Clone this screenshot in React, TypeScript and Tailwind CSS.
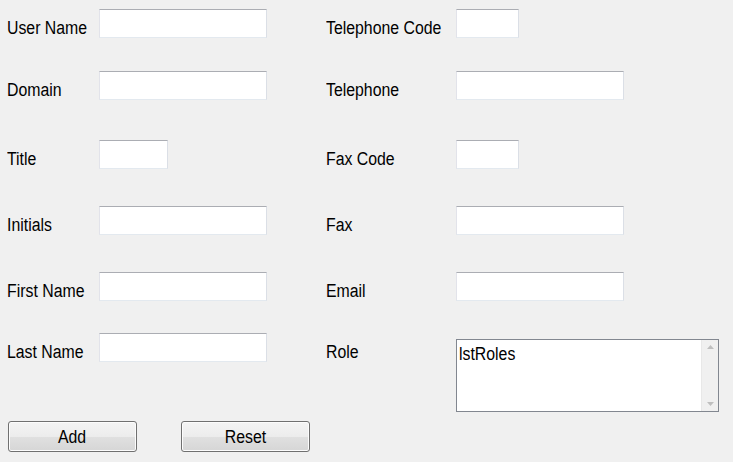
import React from "react";

const font = { fontFamily: '"Liberation Sans", Arial, sans-serif' };

function Narrow({ text, origin = "origin-left" }: { text: string; origin?: string }) {
  return <span className={`inline-block whitespace-nowrap scale-x-[0.88] ${origin}`}>{text}</span>;
}

function TextBox({ w }: { w: string }) {
  return (
    <div
      className={`${w} h-[29px] bg-white border border-t-[#abadb3] border-l-[#e2e3ea] border-r-[#dbdfe6] border-b-[#e3e9ef]`}
    />
  );
}

function Label({ text, w }: { text: string; w: string }) {
  return (
    <div className={`${w} mt-[5px] h-[29px] leading-[29px] text-[18px] text-black shrink-0 whitespace-nowrap`}>
      <Narrow text={text} />
    </div>
  );
}

function Button({ text }: { text: string }) {
  return (
    <div className="w-[129px] h-[31px] pt-[2px] rounded-[3px] border border-[#707070] bg-[linear-gradient(to_bottom,#f4f4f4_0%,#ececec_50%,#e0e0e0_51%,#d6d6d6_100%)] shadow-[inset_0_0_0_1px_#fcfcfc] flex items-center justify-center text-[18px] text-black">
      <Narrow text={text} origin="origin-center" />
    </div>
  );
}

type Row = { l: string; lw: string; r: string; rw: string; h: string };

const rows: Row[] = [
  { l: "User Name", lw: "w-[168px]", r: "Telephone Code", rw: "w-[63px]", h: "h-[62px]" },
  { l: "Domain", lw: "w-[168px]", r: "Telephone", rw: "w-[168px]", h: "h-[69px]" },
  { l: "Title", lw: "w-[69px]", r: "Fax Code", rw: "w-[63px]", h: "h-[66px]" },
  { l: "Initials", lw: "w-[168px]", r: "Fax", rw: "w-[168px]", h: "h-[66px]" },
  { l: "First Name", lw: "w-[168px]", r: "Email", rw: "w-[168px]", h: "h-[61px]" },
];

export default function App() {
  return (
    <div className="w-[733px] h-[462px] bg-[#f0f0f0] overflow-hidden pl-[7px] pt-[9px]" style={font}>
      {rows.map((row) => (
        <div key={row.l} className={`flex items-start ${row.h}`}>
          <Label text={row.l} w="w-[92px]" />
          <div className="w-[227px] shrink-0">
            <TextBox w={row.lw} />
          </div>
          <Label text={row.r} w="w-[130px]" />
          <TextBox w={row.rw} />
        </div>
      ))}
      <div className="flex items-start h-[88px]">
        <Label text="Last Name" w="w-[92px]" />
        <div className="w-[227px] shrink-0">
          <TextBox w="w-[168px]" />
        </div>
        <Label text="Role" w="w-[130px]" />
        <div className="mt-[6px] w-[263px] h-[73px] bg-white border border-[#828790] flex">
          <div className="flex-1 pl-[2px] pt-[3px] text-[18px] leading-[22px] text-black">
            <Narrow text="lstRoles" />
          </div>
          <div className="w-[17px] bg-[#f0f0f0] border-l border-[#e8e8e8] flex flex-col items-center justify-between py-[5px]">
            <svg width="7" height="4" viewBox="0 0 7 4">
              <path d="M0 4 L3.5 0 L7 4 Z" fill="#bfbfbf" />
            </svg>
            <svg width="7" height="4" viewBox="0 0 7 4">
              <path d="M0 0 L3.5 4 L7 0 Z" fill="#bfbfbf" />
            </svg>
          </div>
        </div>
      </div>
      <div className="flex gap-[44px] pl-[1px]">
        <Button text="Add" />
        <Button text="Reset" />
      </div>
    </div>
  );
}
